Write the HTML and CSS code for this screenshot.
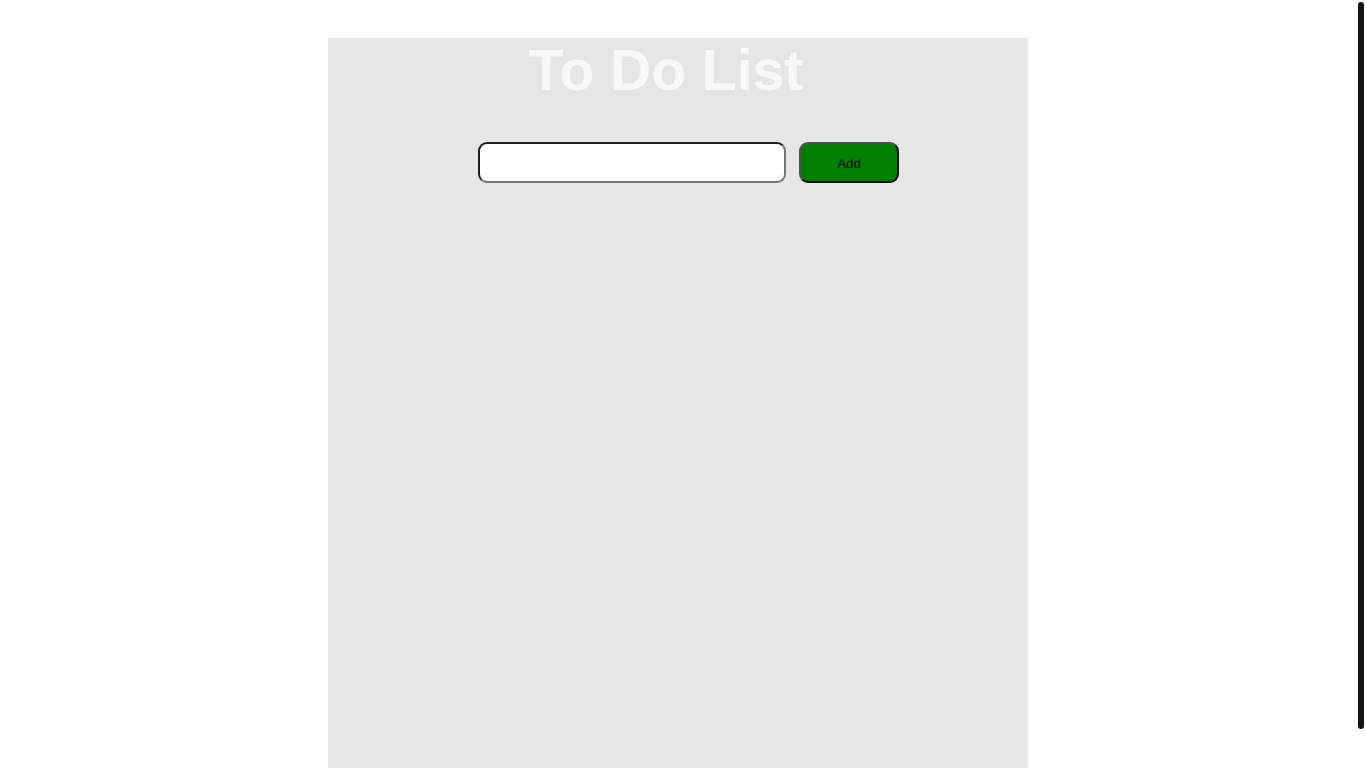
FILE: index.html
```html
<!DOCTYPE html>
<html lang="en">
<head>
<meta charset="utf-8">
<title>To Do List</title>
<link rel="stylesheet" href="styles.css">
</head>
<body>
<main class="app">
  <h1 class="title">To Do List</h1>
  <form class="add-form">
    <input class="task-input" type="text" aria-label="New task">
    <button class="add-btn" type="button">Add</button>
  </form>
  <ul class="tasks"></ul>
</main>
<div class="scroll-thumb" aria-hidden="true"></div>
</body>
</html>
```
FILE: styles.css
```css
html {
  overflow: hidden;
  height: 100%;
}

body {
  margin: 0;
  height: 100%;
  background: #ffffff;
  font-family: "Liberation Sans", Arial, sans-serif;
}

.app {
  box-sizing: border-box;
  width: 700px;
  height: 730px;
  margin: 38px 0 0 328px;
  background: #e6e6e6;
}

.title {
  margin: 0;
  padding-right: 24px;
  font-size: 57px;
  font-weight: 700;
  line-height: 64px;
  text-align: center;
  color: #f8f8f8;
}

.add-form {
  display: flex;
  gap: 13px;
  margin: 40px 0 0 150px;
}

.task-input {
  box-sizing: border-box;
  width: 308px;
  height: 41px;
  margin: 0;
  padding: 0 10px;
  background: #ffffff;
  border: 2px solid;
  border-color: #1e1e1e #767676 #767676 #1e1e1e;
  border-radius: 9px;
  font-family: "Liberation Sans", Arial, sans-serif;
  font-size: 14px;
  outline: none;
}

.add-btn {
  box-sizing: border-box;
  width: 100px;
  height: 41px;
  margin: 0;
  padding: 2px 0 0;
  background: #008000;
  border: 2px solid;
  border-color: #505050 #111111 #111111 #505050;
  border-radius: 9px;
  color: #000000;
  font-family: "Liberation Sans", Arial, sans-serif;
  font-size: 13.33px;
  cursor: pointer;
}

.tasks {
  margin: 0;
  padding: 0;
  list-style: none;
}

.scroll-thumb {
  position: fixed;
  top: 2px;
  right: 2px;
  width: 6px;
  height: 727px;
  border-radius: 3px;
  background: #141414;
}
```
